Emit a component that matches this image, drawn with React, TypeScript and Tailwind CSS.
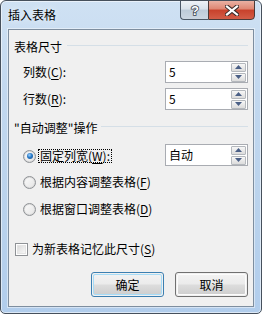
import React from "react";

const U = ({ c }: { c: string }) => (
  <span className="underline decoration-1 underline-offset-[2px]">{c}</span>
);

function Arrow({ up }: { up?: boolean }) {
  return (
    <svg width="7" height="4" viewBox="0 0 7 4">
      {up ? (
        <polygon points="0,4 7,4 3.5,0" fill="#4a5f86" />
      ) : (
        <polygon points="0,0 7,0 3.5,4" fill="#4a5f86" />
      )}
    </svg>
  );
}

function SpinBtn({ up }: { up?: boolean }) {
  return (
    <div className="w-[15px] h-[9px] border border-[#b4b8bd] rounded-[1px] bg-linear-to-b from-[#f7f7f7] to-[#dcdcdc] flex items-center justify-center">
      <Arrow up={up} />
    </div>
  );
}

function SpinBox({ value }: { value: string }) {
  return (
    <div className="w-[83px] h-[22px] border border-[#a9acb2] bg-white flex items-center pl-[3px] pr-[1px]">
      <span className="flex-1 text-[12px] leading-[16px] text-black">{value}</span>
      <div className="flex flex-col gap-[1px]">
        <SpinBtn up />
        <SpinBtn />
      </div>
    </div>
  );
}

function Radio({ checked }: { checked?: boolean }) {
  return (
    <span className="w-[13px] h-[13px] rounded-full border border-[#8f9296] bg-[radial-gradient(circle_at_50%_50%,#f4f4f4_0%,#e0e0e0_55%,#d0d0d0_100%)] flex items-center justify-center shrink-0">
      <span className="w-[9px] h-[9px] rounded-full bg-linear-to-br from-[#f9f9f9] to-[#e6e6e6] flex items-center justify-center">
        {checked && (
          <span className="w-[6px] h-[6px] rounded-full bg-[radial-gradient(circle_at_40%_35%,#9fd2ff_0%,#2a7bc8_45%,#0d4c8f_100%)]" />
        )}
      </span>
    </span>
  );
}

function Header({ text, lineMl }: { text: string; lineMl: string }) {
  return (
    <div className="flex items-center h-[16px]">
      <span className="text-[12px] leading-[16px] text-black whitespace-nowrap">{text}</span>
      <div className={`flex-1 h-px bg-[#d5dfe7] -mt-[3px] ${lineMl}`} />
    </div>
  );
}

export default function App() {
  return (
    <div className="w-[262px] h-[314px] font-['Microsoft_YaHei','Noto_Sans_CJK_SC',sans-serif] text-black">
      <div className="w-[262px] h-[314px] border border-[#46505c] rounded-t-[6px] rounded-b-[5px] bg-[linear-gradient(to_bottom,#cfe1f3_0%,#c2d8ef_30%,#b9d2ec_70%,#b1cdec_100%)] shadow-[inset_0_0_0_1px_rgba(255,255,255,0.55)] flex flex-col overflow-hidden">
        {/* Title bar */}
        <div className="h-[28px] flex items-start shrink-0">
          <div className="h-[28px] flex items-center pl-[7px] flex-1">
            <span className="text-[12px] leading-[16px] text-black [text-shadow:0_0_6px_rgba(255,255,255,0.9)]">
              插入表格
            </span>
          </div>
          <div className="flex mr-[6px] -mt-[1px]">
            <div className="w-[28px] h-[20px] border border-[#4b5867] border-r-0 rounded-bl-[4px] bg-[linear-gradient(to_bottom,#eef2f7_0%,#d9e2eb_45%,#bdcbd9_50%,#ccd7e3_100%)] flex items-center justify-center">
              <svg width="10" height="13" viewBox="0 0 10 13">
                <text
                  x="5"
                  y="11"
                  textAnchor="middle"
                  fontSize="13"
                  fontWeight="bold"
                  fontFamily="Liberation Sans, sans-serif"
                  fill="#ffffff"
                  stroke="#3a4450"
                  strokeWidth="1.6"
                  paintOrder="stroke"
                >
                  ?
                </text>
              </svg>
            </div>
            <div className="w-[47px] h-[20px] border border-[#4b3a38] rounded-br-[4px] bg-[linear-gradient(to_bottom,#eab1a3_0%,#df8672_45%,#c8412b_50%,#d35d47_100%)] flex items-center justify-center">
              <svg width="14" height="11" viewBox="0 0 14 11">
                <path d="M2 1.5 L12 9.5 M12 1.5 L2 9.5" stroke="#3b2c2a" strokeWidth="4.2" strokeLinecap="square" />
                <path d="M2 1.5 L12 9.5 M12 1.5 L2 9.5" stroke="#ffffff" strokeWidth="2.2" strokeLinecap="square" />
              </svg>
            </div>
          </div>
        </div>

        {/* Client area */}
        <div className="mx-[7px] h-[278px] border border-[#7e8e9f] bg-[#f0f0f0] shadow-[0_0_0_1px_rgba(255,255,255,0.45)] flex flex-col pl-[5px] pr-[5px] pt-[9px] text-[12px] leading-[16px]">
          <Header text="表格尺寸" lineMl="ml-[5px]" />

          <div className="mt-[6px] flex items-center justify-between">
            <span className="ml-[9px]">
              列数(<U c="C" />):
            </span>
            <SpinBox value="5" />
          </div>
          <div className="mt-[5px] flex items-center justify-between">
            <span className="ml-[9px]">
              行数(<U c="R" />):
            </span>
            <SpinBox value="5" />
          </div>

          <div className="mt-[10px]">
            <Header text={'"自动调整"操作'} lineMl="ml-[4px]" />
          </div>

          <div className="mt-[8px] h-[22px] flex items-center justify-between">
            <div className="flex items-center ml-[9px] mt-[2px]">
              <Radio checked />
              <span className="ml-[2px] border border-dotted border-black px-[1px] h-[14px] flex items-center">
                固定列宽(<U c="W" />):
              </span>
            </div>
            <SpinBox value="自动" />
          </div>

          <div className="mt-[8px] h-[16px] flex items-center ml-[9px]">
            <Radio />
            <span className="ml-[2px] border border-transparent px-[1px]">
              根据内容调整表格(<U c="F" />)
            </span>
          </div>
          <div className="mt-[11px] h-[16px] flex items-center ml-[9px]">
            <Radio />
            <span className="ml-[2px] border border-transparent px-[1px]">
              根据窗口调整表格(<U c="D" />)
            </span>
          </div>

          <div className="mt-[24px] h-[16px] flex items-center ml-[1px]">
            <span className="w-[13px] h-[13px] border border-[#8f9296] bg-white flex items-center justify-center shrink-0">
              <span className="w-[9px] h-[9px] bg-linear-to-br from-[#dcdcdc] to-[#f7f7f7] border border-[#e4e4e4]" />
            </span>
            <span className="ml-[4px]">
              为新表格记忆此尺寸(<U c="S" />)
            </span>
          </div>

          <div className="mt-[15px] flex justify-end gap-[11px]">
            <div className="w-[73px] h-[25px] rounded-[3px] border border-[#3c7fb1] p-px">
              <div className="w-full h-full rounded-[2px] border border-[#a6dcf7] bg-[linear-gradient(to_bottom,#f2f2f2_0%,#ebebeb_48%,#dddddd_52%,#cfcfcf_100%)] flex items-center justify-center">
                确定
              </div>
            </div>
            <div className="w-[73px] h-[25px] rounded-[3px] border border-[#707070] p-px">
              <div className="w-full h-full rounded-[2px] border border-[#fcfcfc] bg-[linear-gradient(to_bottom,#f2f2f2_0%,#ebebeb_48%,#dddddd_52%,#cfcfcf_100%)] flex items-center justify-center">
                取消
              </div>
            </div>
          </div>
        </div>
      </div>
    </div>
  );
}
